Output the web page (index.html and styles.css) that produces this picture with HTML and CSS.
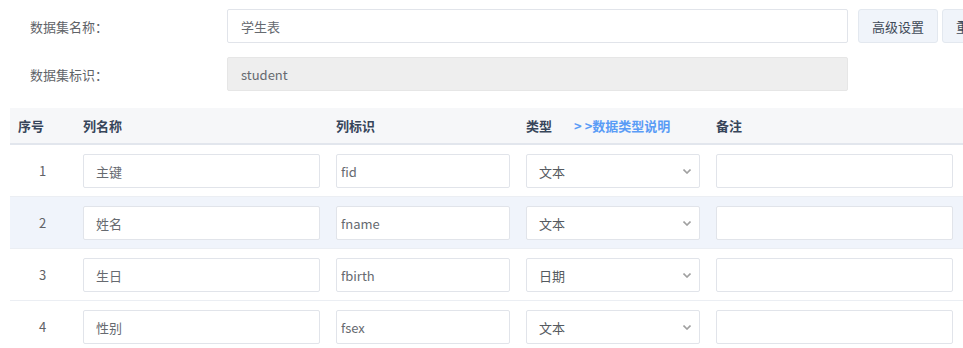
FILE: index.html
```html
<!DOCTYPE html>
<html lang="zh">
<head>
<meta charset="utf-8">
<link rel="stylesheet" href="styles.css">
</head>
<body>
<div class="page">
  <div class="form">
    <div class="form-row">
      <label class="form-label">数据集名称：</label>
      <input class="text-input wide" value="学生表">
      <div class="btns">
        <button class="btn">高级设置</button>
        <button class="btn">重置</button>
      </div>
    </div>
    <div class="form-row">
      <label class="form-label">数据集标识：</label>
      <input class="text-input wide disabled" value="student" disabled>
    </div>
  </div>

  <div class="table">
    <div class="tr thead">
      <div class="td c-seq">序号</div>
      <div class="td c-name">列名称</div>
      <div class="td c-id">列标识</div>
      <div class="td c-type">类型<a class="type-link">&gt; &gt;数据类型说明</a></div>
      <div class="td c-note">备注</div>
    </div>

    <div class="tr">
      <div class="td c-seq num">1</div>
      <div class="td c-name"><input class="text-input" value="主键"></div>
      <div class="td c-id"><input class="text-input ident" value="fid"></div>
      <div class="td c-type"><div class="select"><select><option>文本</option></select><svg class="chev" width="8" height="5" viewBox="0 0 8 5"><path d="M0.5 0.5 L4 4 L7.5 0.5" fill="none" stroke="#a0a0a0" stroke-width="1.6"/></svg></div></div>
      <div class="td c-note"><input class="text-input" value=""></div>
    </div>

    <div class="tr striped">
      <div class="td c-seq num">2</div>
      <div class="td c-name"><input class="text-input" value="姓名"></div>
      <div class="td c-id"><input class="text-input ident" value="fname"></div>
      <div class="td c-type"><div class="select"><select><option>文本</option></select><svg class="chev" width="8" height="5" viewBox="0 0 8 5"><path d="M0.5 0.5 L4 4 L7.5 0.5" fill="none" stroke="#a0a0a0" stroke-width="1.6"/></svg></div></div>
      <div class="td c-note"><input class="text-input" value=""></div>
    </div>

    <div class="tr">
      <div class="td c-seq num">3</div>
      <div class="td c-name"><input class="text-input" value="生日"></div>
      <div class="td c-id"><input class="text-input ident" value="fbirth"></div>
      <div class="td c-type"><div class="select"><select><option>日期</option></select><svg class="chev" width="8" height="5" viewBox="0 0 8 5"><path d="M0.5 0.5 L4 4 L7.5 0.5" fill="none" stroke="#a0a0a0" stroke-width="1.6"/></svg></div></div>
      <div class="td c-note"><input class="text-input" value=""></div>
    </div>

    <div class="tr">
      <div class="td c-seq num">4</div>
      <div class="td c-name"><input class="text-input" value="性别"></div>
      <div class="td c-id"><input class="text-input ident" value="fsex"></div>
      <div class="td c-type"><div class="select"><select><option>文本</option></select><svg class="chev" width="8" height="5" viewBox="0 0 8 5"><path d="M0.5 0.5 L4 4 L7.5 0.5" fill="none" stroke="#a0a0a0" stroke-width="1.6"/></svg></div></div>
      <div class="td c-note"><input class="text-input" value=""></div>
    </div>
  </div>
</div>
</body>
</html>
```

FILE: styles.css
```css
* { box-sizing: border-box; }

html, body {
  margin: 0;
  padding: 0;
  background: #ffffff;
  overflow: hidden;
}

body {
  font-family: "Noto Sans CJK SC", "Noto Sans", "Liberation Sans", sans-serif;
  font-size: 13px;
  color: #606266;
}

.page {
  width: 1000px;
}

.form {
  padding: 9px 0 0 30px;
  display: flex;
  flex-direction: column;
  gap: 14px;
}

.form-row {
  display: flex;
  align-items: center;
  height: 34px;
}

.form-label {
  width: 197px;
  flex: none;
  color: #5f6368;
  font-size: 13px;
}

.text-input {
  height: 34px;
  border: 1px solid #e1e4ea;
  border-radius: 2px;
  background: #ffffff;
  padding: 0 12px;
  font-family: inherit;
  font-size: 13px;
  color: #666a70;
  outline: none;
  width: 100%;
}

.text-input.wide {
  width: 621px;
  flex: none;
  padding-left: 13px;
}

.text-input.disabled {
  background: #eeeeee;
  border-color: #e6e6e6;
  color: #666a70;
}

.text-input.ident {
  padding-left: 4px;
}

.btns {
  display: flex;
  flex: none;
  gap: 4px;
  margin-left: 10px;
}

.btn {
  height: 34px;
  flex: none;
  border: 1px solid #e3e8ef;
  border-radius: 3px;
  background: #f0f4fa;
  color: #3f4a58;
  font-family: inherit;
  font-size: 13px;
  padding: 0 13px;
}

.table {
  margin: 17px 0 0 10px;
  width: 980px;
}

.tr {
  display: flex;
  height: 52px;
  border-bottom: 1px solid #ebeef3;
  align-items: flex-start;
}

.tr.thead {
  height: 37px;
  background: #f6f7f9;
  border-bottom: 2px solid #e2e6ed;
  align-items: center;
  font-weight: bold;
  color: #37455a;
}

.tr.striped {
  background: #f0f4fb;
}

.td {
  padding: 9px 8px 0;
  flex: none;
}

.thead .td {
  padding-top: 0;
}

.c-seq { width: 65px; }
.c-name { width: 253px; }
.c-id { width: 190px; }
.c-type { width: 190px; }
.c-note { width: 253px; }

.num {
  text-align: center;
  line-height: 34px;
  color: #606266;
}

.type-link {
  color: #5a9cf6;
  margin-left: 22px;
}

.select {
  position: relative;
  height: 34px;
}

.select select {
  appearance: none;
  -webkit-appearance: none;
  width: 100%;
  height: 34px;
  border: 1px solid #e1e4ea;
  border-radius: 2px;
  background: #ffffff;
  padding: 0 12px;
  font-family: inherit;
  font-size: 13px;
  color: #555a60;
  outline: none;
}

.chev {
  position: absolute;
  right: 9px;
  top: 15px;
  pointer-events: none;
}
```
